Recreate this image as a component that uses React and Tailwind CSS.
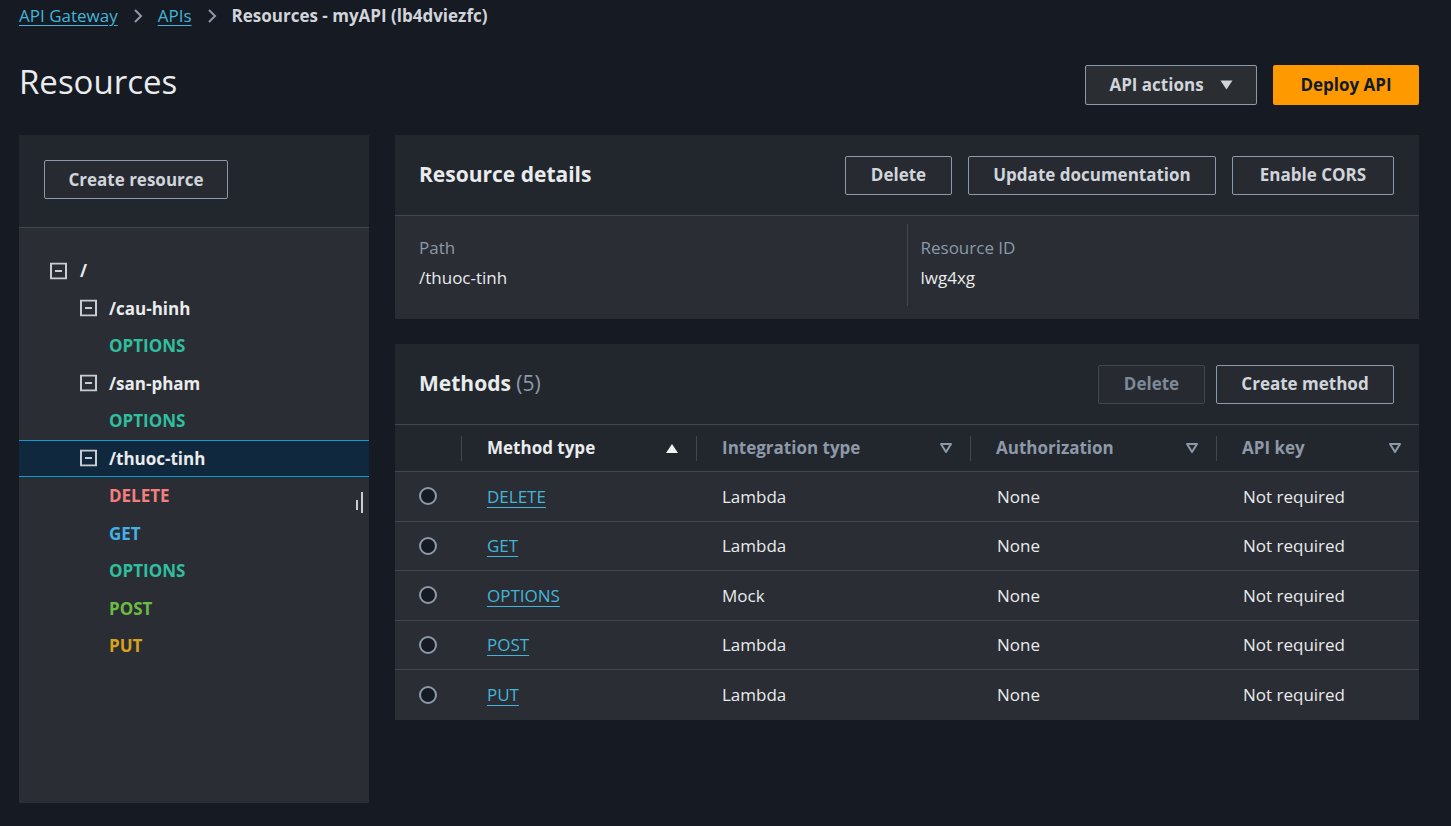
import React from "react";

const FONT = { fontFamily: '"Open Sans", "Noto Sans", sans-serif' };

const tree = [
    { label: "/", kind: "res", icon: 31, text: 61 },
    { label: "/cau-hinh", kind: "res", icon: 61, text: 90 },
    { label: "OPTIONS", kind: "opt", text: 90 },
    { label: "/san-pham", kind: "res", icon: 61, text: 90 },
    { label: "OPTIONS", kind: "opt", text: 90 },
    { label: "/thuoc-tinh", kind: "res", icon: 61, text: 90, selected: true },
    { label: "DELETE", kind: "del", text: 90 },
    { label: "GET", kind: "get", text: 90 },
    { label: "OPTIONS", kind: "opt", text: 90 },
    { label: "POST", kind: "post", text: 90 },
    { label: "PUT", kind: "put", text: 90 },
];

const methodColor = {
    res: "text-[#e9ebed]",
    opt: "text-[#2fbf9f]",
    del: "text-[#f37e7e]",
    get: "text-[#43b0e6]",
    post: "text-[#6cbb45]",
    put: "text-[#d8a11e]",
};

const rows = [
    { m: "DELETE", i: "Lambda" },
    { m: "GET", i: "Lambda" },
    { m: "OPTIONS", i: "Mock" },
    { m: "POST", i: "Lambda" },
    { m: "PUT", i: "Lambda" },
];

function MinusBox() {
    return (
        <svg width="17" height="17" viewBox="0 0 17 17" fill="none">
            <rect x="1" y="1" width="15" height="15" stroke="#c9cdd2" strokeWidth="2" />
            <line x1="5" y1="8.5" x2="12" y2="8.5" stroke="#c9cdd2" strokeWidth="2" />
        </svg>
    );
}

function FilterTri() {
    return (
        <svg width="14" height="12" viewBox="0 0 14 12" fill="none">
            <path d="M2 2 H12 L7 10 Z" stroke="#8d99a8" strokeWidth="2" strokeLinejoin="round" />
        </svg>
    );
}

function Btn({ children, className = "", disabled }) {
    return (
        <button
            className={
                "h-[39px] rounded-[2px] border text-[17px] font-bold bg-[#272b31] " +
                (disabled ? "border-[#414750] text-[#7d8998] " : "border-[#8d99a8] text-[#d1d5db] ") +
                className
            }
        >
            {children}
        </button>
    );
}

function HeadCell({ label, active }) {
    return (
        <div className="flex items-center h-full">
            <div className="w-px h-[25px] bg-[#414750]"></div>
            <div className="flex-1 flex items-center justify-between pl-[25px] pr-[17px]">
                <span className={"font-bold " + (active ? "text-[#e9ebed]" : "text-[#8d99a8]")}>{label}</span>
                {active ? (
                    <svg width="14" height="11" viewBox="0 0 14 11">
                        <path d="M1 10 L7 1 L13 10 Z" fill="#f2f3f3" />
                    </svg>
                ) : (
                    <FilterTri />
                )}
            </div>
        </div>
    );
}

export default function App() {
    return (
        <div style={FONT} className="min-h-screen bg-[#161a22] pl-[19px] pr-[32px] text-[17px] text-[#d1d5db]">
            {/* Breadcrumb */}
            <div className="h-[32px] flex items-center gap-[14px]">
                <a className="text-[#44b5d8] underline underline-offset-[3px]">API Gateway</a>
                <svg width="12" height="16" viewBox="0 0 12 16" fill="none">
                    <path d="M3 2 L9 8 L3 14" stroke="#8d99a8" strokeWidth="2" />
                </svg>
                <a className="text-[#44b5d8] underline underline-offset-[3px]">APIs</a>
                <svg width="12" height="16" viewBox="0 0 12 16" fill="none">
                    <path d="M3 2 L9 8 L3 14" stroke="#8d99a8" strokeWidth="2" />
                </svg>
                <span className="font-bold text-[#d1d5db]">Resources - myAPI (lb4dviezfc)</span>
            </div>

            {/* Header */}
            <div className="mt-[30px] h-[45px] flex items-center justify-between">
                <h1 className="text-[33px] text-[#e9ebed] -mt-[6px]">Resources</h1>
                <div className="flex items-center gap-[16px]">
                    <button className="h-[40px] w-[172px] rounded-[2px] border border-[#8d99a8] bg-[#2a2e33] font-bold text-[#d1d5db] flex items-center justify-center gap-[16px]">
                        API actions
                        <svg width="13" height="10" viewBox="0 0 13 10">
                            <path d="M0.5 0.5 H12.5 L6.5 9.5 Z" fill="#d1d5db" />
                        </svg>
                    </button>
                    <button className="h-[40px] w-[146px] rounded-[2px] bg-[#ff9900] font-bold text-[#0f1b2a]">
                        Deploy API
                    </button>
                </div>
            </div>

            <div className="mt-[28px] flex gap-[26px] items-start">
                {/* Left tree panel */}
                <div className="relative w-[350px] h-[668px] bg-[#2a2d33] shrink-0">
                    <div className="h-[93px] bg-[#22262d] border-b border-[#414750] pl-[25px] pt-[25px]">
                        <Btn className="w-[184px]">Create resource</Btn>
                    </div>
                    <div className="pt-[24px]">
                        {tree.map((r, idx) => (
                            <div
                                key={idx}
                                className={
                                    "relative h-[37.5px] flex items-center font-bold " +
                                    methodColor[r.kind] +
                                    (r.selected ? " bg-[#10283d] border-y border-[#0a9fd0]" : "")
                                }
                            >
                                {r.icon !== undefined && (
                                    <span className="absolute top-1/2 -translate-y-1/2" style={{ left: r.icon }}>
                                        <MinusBox />
                                    </span>
                                )}
                                <span style={{ marginLeft: r.text }}>{r.label}</span>
                            </div>
                        ))}
                    </div>
                    <div className="absolute right-[11px] top-[365px] w-[2px] h-[10px] bg-[#c9cdd2]"></div>
                    <div className="absolute right-[6px] top-[357px] w-[2px] h-[21px] bg-[#c9cdd2]"></div>
                </div>

                {/* Right column */}
                <div className="flex-1 flex flex-col gap-[25px]">
                    {/* Resource details */}
                    <div className="bg-[#2a2d33]">
                        <div className="h-[81px] bg-[#22262d] border-b border-[#414750] flex items-center justify-between pl-[24px] pr-[25px]">
                            <h2 className="text-[21px] font-bold text-[#e9ebed]">Resource details</h2>
                            <div className="flex items-center gap-[16px]">
                                <Btn className="w-[107px]">Delete</Btn>
                                <Btn className="w-[248px]">Update documentation</Btn>
                                <Btn className="w-[162px]">Enable CORS</Btn>
                            </div>
                        </div>
                        <div className="grid grid-cols-2 pl-[24px] pr-[25px] pt-[8px] pb-[13px]">
                            <div className="pt-[9px] pb-[13px] leading-[30px]">
                                <div className="text-[#8d99a8]">Path</div>
                                <div className="text-[#e9ebed]">/thuoc-tinh</div>
                            </div>
                            <div className="border-l border-[#414750] pl-[13px] pt-[9px] pb-[13px] leading-[30px]">
                                <div className="text-[#8d99a8]">Resource ID</div>
                                <div className="text-[#e9ebed]">lwg4xg</div>
                            </div>
                        </div>
                    </div>

                    {/* Methods */}
                    <div className="bg-[#2a2d33]">
                        <div className="h-[80px] bg-[#22262d] flex items-center justify-between pl-[24px] pr-[25px]">
                            <h2 className="text-[21px] font-bold text-[#e9ebed]">
                                Methods <span className="font-normal text-[#8d99a8]">(5)</span>
                            </h2>
                            <div className="flex items-center gap-[11px]">
                                <Btn disabled className="w-[107px]">Delete</Btn>
                                <Btn className="w-[178px]">Create method</Btn>
                            </div>
                        </div>
                        <div className="grid grid-cols-[66px_235px_274px_246px_1fr] h-[48px] bg-[#22262d] border-y border-[#414750]">
                            <div></div>
                            <HeadCell label="Method type" active />
                            <HeadCell label="Integration type" />
                            <HeadCell label="Authorization" />
                            <HeadCell label="API key" />
                        </div>
                        {rows.map((r, idx) => (
                            <div
                                key={r.m}
                                className={
                                    "grid grid-cols-[66px_235px_274px_246px_1fr] h-[49.6px] items-center " +
                                    (idx < rows.length - 1 ? "border-b border-[#414750]" : "")
                                }
                            >
                                <div className="flex justify-center">
                                    <span className="w-[18px] h-[18px] rounded-full border-2 border-[#8d99a8] bg-[#161a22]"></span>
                                </div>
                                <div className="pl-[26px]">
                                    <a className="text-[#44b5d8] underline underline-offset-[4px]">{r.m}</a>
                                </div>
                                <div className="pl-[26px] text-[#e9ebed]">{r.i}</div>
                                <div className="pl-[27px] text-[#e9ebed]">None</div>
                                <div className="pl-[27px] text-[#e9ebed]">Not required</div>
                            </div>
                        ))}
                    </div>
                </div>
            </div>
        </div>
    );
}
